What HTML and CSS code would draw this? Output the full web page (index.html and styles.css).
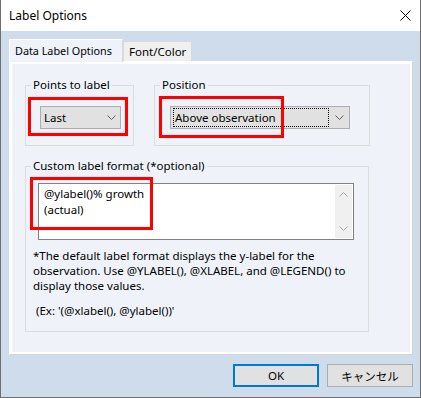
FILE: index.html
```html
<!DOCTYPE html>
<html lang="en">
<head>
    <meta charset="UTF-8">
    <meta name="viewport" content="width=device-width, initial-scale=1.0">
    <title>Label Options</title>
    <link rel="stylesheet" href="styles.css">
</head>
<body>
    <div class="window">
        <div class="titlebar">
            <span class="title">Label Options</span>
            <svg class="close" width="11" height="11" viewBox="0 0 11 11">
                <path d="M0.5 0.5L10.5 10.5M10.5 0.5L0.5 10.5" stroke="#000" stroke-width="1" fill="none"/>
            </svg>
        </div>
        <div class="client">
            <div class="tabs">
                <div class="tab active">Data Label Options</div>
                <div class="tab">Font/Color</div>
            </div>
            <div class="panel">
                <div class="row">
                    <fieldset class="group points">
                        <legend>Points to label</legend>
                        <div class="group-body">
                            <div class="combo combo-points">
                                <span class="combo-value">Last</span>
                                <svg class="chevron" width="9" height="5" viewBox="0 0 9 5">
                                    <path d="M0.5 0.5L4.5 4.5L8.5 0.5" stroke="#606060" fill="none"/>
                                </svg>
                            </div>
                            <div class="mark mark-points"></div>
                        </div>
                    </fieldset>
                    <fieldset class="group position">
                        <legend>Position</legend>
                        <div class="group-body">
                            <div class="combo combo-position">
                                <span class="combo-value focused">Above observation</span>
                                <svg class="chevron" width="9" height="5" viewBox="0 0 9 5">
                                    <path d="M0.5 0.5L4.5 4.5L8.5 0.5" stroke="#606060" fill="none"/>
                                </svg>
                            </div>
                            <div class="mark mark-position"></div>
                        </div>
                    </fieldset>
                </div>
                <fieldset class="group custom">
                    <legend>Custom label format (*optional)</legend>
                    <div class="group-body">
                        <div class="textbox">
                            <div class="textbox-text">@ylabel()% growth<br>(actual)</div>
                            <div class="scrollbar">
                                <svg width="9" height="5" viewBox="0 0 9 5">
                                    <path d="M0.5 4.5L4.5 0.5L8.5 4.5" stroke="#a6a6a6" fill="none"/>
                                </svg>
                                <svg width="9" height="5" viewBox="0 0 9 5">
                                    <path d="M0.5 0.5L4.5 4.5L8.5 0.5" stroke="#a6a6a6" fill="none"/>
                                </svg>
                            </div>
                        </div>
                        <p class="help">*The default label format displays the y-label for the observation. Use @YLABEL(), @XLABEL, and @LEGEND() to display those values.</p>
                        <p class="example">(Ex: '(@xlabel(), @ylabel())'</p>
                        <div class="mark mark-custom"></div>
                    </div>
                </fieldset>
            </div>
            <div class="buttons">
                <button class="btn default">OK</button>
                <button class="btn">キャンセル</button>
            </div>
        </div>
    </div>
</body>
</html>
```
FILE: styles.css
```css
/* Dialog */
body {
    margin: 0;
    padding: 0;
    font-family: "Noto Sans", "Noto Sans CJK JP", sans-serif;
    font-size: 11.5px;
    color: #000;
}
.window {
    width: 421px;
    height: 398px;
    box-sizing: border-box;
    border: 1px solid #6f6f6f;
    border-top: none;
    display: flex;
    flex-direction: column;
}
.titlebar {
    height: 31px;
    background-color: #fff;
    display: flex;
    align-items: center;
    justify-content: space-between;
    padding: 0 9px 0 8px;
}
.title {
    font-size: 12px;
    line-height: 16px;
}
.close {
    display: block;
}
.client {
    flex: 1;
    background-color: #cfdcec;
    padding: 8px 7px 0 8px;
}

/* Tabs */
.tabs {
    height: 22px;
    display: flex;
    align-items: flex-end;
}
.tab {
    height: 20px;
    box-sizing: border-box;
    padding: 2px 5px 0;
    background-color: #f0f0f0;
    border: 1px solid #d9d9d9;
    border-bottom: none;
    line-height: 16px;
    white-space: nowrap;
}
.tab.active {
    position: relative;
    z-index: 1;
    height: 23px;
    margin-bottom: -1px;
    width: 114px;
    padding: 3px 0 0 5px;
    font-size: 10.8px;
    background-color: #eff3f9;
    border-color: #fff #d9d9d9 #fff #fff;
}
.panel {
    background-color: #eff3f9;
    border: 1px solid #d5d5d5;
    border-top-color: #fff;
    border-left-color: #fff;
    box-shadow: inset 0 0 0 2px #fff;
    padding: 15px 0 22px 15px;
}
.row {
    display: flex;
}

/* Group boxes */
.group {
    margin: 0;
    padding: 0;
    border: 1px solid #dcdcdc;
    box-sizing: border-box;
}
.group legend {
    margin-left: 5px;
    padding: 0 2px;
    line-height: 16px;
}
.group-body {
    position: relative;
}
.points {
    width: 109px;
    margin-right: 20px;
}
.points .group-body {
    padding: 13px 0 16px 14px;
}
.position {
    width: 216px;
}
.position .group-body {
    padding: 13px 0 16px 15px;
}
.custom {
    width: 344px;
    margin-top: 12px;
}
.custom .group-body {
    padding: 9px 0 13px 7px;
}

/* Combo boxes */
.combo {
    height: 23px;
    box-sizing: border-box;
    background-color: #e1e1e1;
    border: 1px solid #adadad;
    display: flex;
    align-items: center;
    justify-content: space-between;
    padding: 0 4px 0 3px;
}
.combo-points {
    width: 81px;
}
.combo-position {
    width: 180px;
    padding: 1px 5px 1px 2px;
    align-items: stretch;
}
.combo-value {
    line-height: 16px;
}
.combo-value.focused {
    width: 156px;
    box-sizing: border-box;
    border: 1px dotted #000;
    padding: 1px 0 0 1px;
}
.combo-position .chevron {
    align-self: center;
}

/* Text box */
.textbox {
    width: 316px;
    height: 57px;
    margin-left: 5px;
    box-sizing: border-box;
    border: 1px solid #828282;
    background-color: #fff;
    display: flex;
    padding: 1px;
}
.textbox-text {
    flex: 1;
    padding: 1px 0 0 4px;
    line-height: 16px;
}
.scrollbar {
    width: 17px;
    background-color: #f0f0f0;
    display: flex;
    flex-direction: column;
    justify-content: space-between;
    align-items: center;
    padding: 7px 0;
}
.help {
    width: 320px;
    margin: 8px 0 0;
    line-height: 15px;
}
.example {
    margin: 10px 0 0;
    padding-left: 3px;
    line-height: 15px;
}

/* Red highlight marks */
.mark {
    position: absolute;
    border: 3px solid #ff0000;
    box-sizing: border-box;
}
.mark-points {
    left: 2px;
    top: 4px;
    width: 100px;
    height: 39px;
}
.mark-position {
    left: 4px;
    top: 3px;
    width: 125px;
    height: 42px;
}
.mark-custom {
    left: 4px;
    top: 3px;
    width: 123px;
    height: 53px;
}

/* Buttons */
.buttons {
    display: flex;
    justify-content: flex-end;
    gap: 8px;
    margin-top: 9px;
}
.btn {
    width: 86px;
    height: 23px;
    background-color: #e1e1e1;
    border: 1px solid #adadad;
    font-family: "Noto Sans", "Noto Sans CJK JP", sans-serif;
    font-size: 11.5px;
    color: #000;
    padding: 0;
}
.btn.default {
    border: 2px solid #0078d7;
}
```
